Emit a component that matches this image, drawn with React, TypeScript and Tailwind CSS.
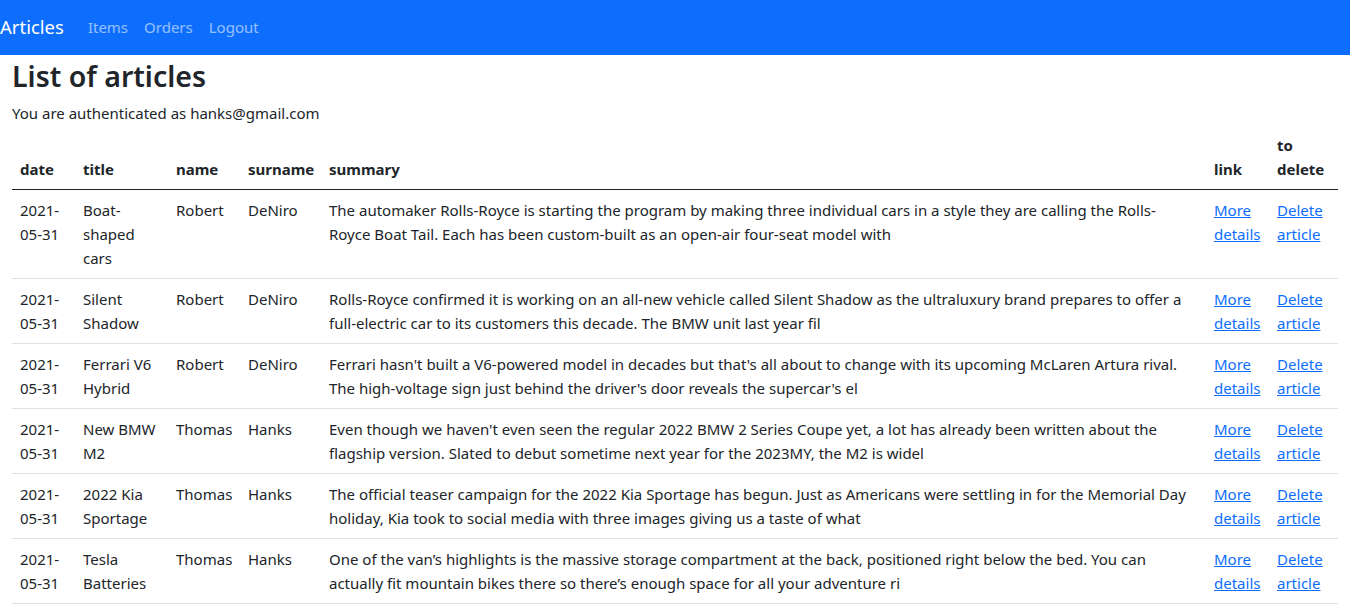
import React from 'react'

const articles = [
  {
    title: ['Boat-', 'shaped', 'cars'],
    name: 'Robert',
    surname: 'DeNiro',
    summary: [
      'The automaker Rolls-Royce is starting the program by making three individual cars in a style they are calling the Rolls-',
      'Royce Boat Tail. Each has been custom-built as an open-air four-seat model with',
    ],
  },
  {
    title: ['Silent', 'Shadow'],
    name: 'Robert',
    surname: 'DeNiro',
    summary: [
      'Rolls-Royce confirmed it is working on an all-new vehicle called Silent Shadow as the ultraluxury brand prepares to offer a',
      'full-electric car to its customers this decade. The BMW unit last year fil',
    ],
  },
  {
    title: ['Ferrari V6', 'Hybrid'],
    name: 'Robert',
    surname: 'DeNiro',
    summary: [
      "Ferrari hasn't built a V6-powered model in decades but that's all about to change with its upcoming McLaren Artura rival.",
      "The high-voltage sign just behind the driver's door reveals the supercar's el",
    ],
  },
  {
    title: ['New BMW', 'M2'],
    name: 'Thomas',
    surname: 'Hanks',
    summary: [
      "Even though we haven't even seen the regular 2022 BMW 2 Series Coupe yet, a lot has already been written about the",
      'flagship version. Slated to debut sometime next year for the 2023MY, the M2 is widel',
    ],
  },
  {
    title: ['2022 Kia', 'Sportage'],
    name: 'Thomas',
    surname: 'Hanks',
    summary: [
      'The official teaser campaign for the 2022 Kia Sportage has begun. Just as Americans were settling in for the Memorial Day',
      'holiday, Kia took to social media with three images giving us a taste of what',
    ],
  },
  {
    title: ['Tesla', 'Batteries'],
    name: 'Thomas',
    surname: 'Hanks',
    summary: [
      'One of the van’s highlights is the massive storage compartment at the back, positioned right below the bed. You can',
      'actually fit mountain bikes there so there’s enough space for all your adventure ri',
    ],
  },
]

function Lines({ lines }: { lines: string[] }) {
  return (
    <>
      {lines.map((l, i) => (
        <div key={i} className="whitespace-nowrap">{l}</div>
      ))}
    </>
  )
}

export default function App() {
  return (
    <div className="min-h-screen bg-white text-[#212529] text-[15px] leading-6 font-['Noto_Sans','Open_Sans',sans-serif]">
      <nav className="h-[55px] bg-[#0d6efd] flex items-center pb-[2px]">
        <span className="text-[18.5px] text-white mr-4">Articles</span>
        <a className="px-2 text-white/55">Items</a>
        <a className="px-2 text-white/55">Orders</a>
        <a className="px-2 text-white/55">Logout</a>
      </nav>

      <main className="px-3">
        <h1 className="text-[28.5px] font-semibold leading-[38px] pt-[2px] mb-[6px]">List of articles</h1>
        <div>You are authenticated as hanks@gmail.com</div>

        <table className="w-full table-fixed border-collapse text-left">
          <colgroup>
            <col className="w-[63px]" />
            <col className="w-[93px]" />
            <col className="w-[72px]" />
            <col className="w-[81px]" />
            <col />
            <col className="w-[63px]" />
            <col className="w-[69px]" />
          </colgroup>
          <thead>
            <tr className="border-b-[1.5px] border-[#212529] align-bottom">
              <th className="p-2 font-bold">date</th>
              <th className="p-2 font-bold">title</th>
              <th className="p-2 font-bold">name</th>
              <th className="p-2 font-bold">surname</th>
              <th className="p-2 font-bold">summary</th>
              <th className="p-2 font-bold">link</th>
              <th className="p-2 font-bold">
                <div>to</div>
                <div>delete</div>
              </th>
            </tr>
          </thead>
          <tbody>
            {articles.map((a, i) => (
              <tr key={i} className="border-b border-[#dee2e6] align-top">
                <td className="p-2">
                  <Lines lines={['2021-', '05-31']} />
                </td>
                <td className="p-2">
                  <Lines lines={a.title} />
                </td>
                <td className="p-2">{a.name}</td>
                <td className="p-2">{a.surname}</td>
                <td className="p-2">
                  <Lines lines={a.summary} />
                </td>
                <td className="p-2">
                  <a href="#" className="text-[#0d6efd] underline">More<br />details</a>
                </td>
                <td className="p-2">
                  <a href="#" className="text-[#0d6efd] underline">Delete<br />article</a>
                </td>
              </tr>
            ))}
          </tbody>
        </table>
      </main>
    </div>
  )
}
